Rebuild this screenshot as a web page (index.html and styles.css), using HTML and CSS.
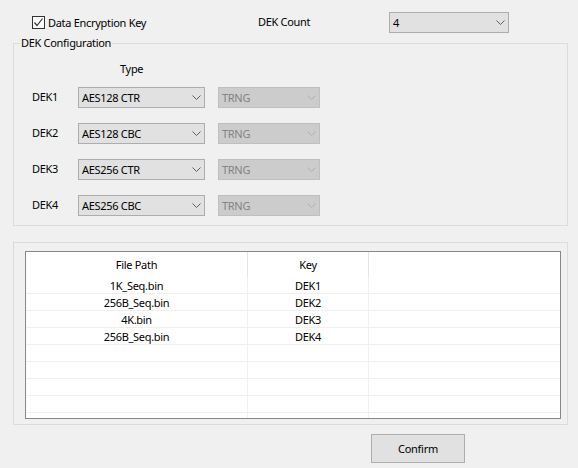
FILE: index.html
```html
<!DOCTYPE html>
<html>
<head>
<meta charset="utf-8">
<link rel="stylesheet" href="styles.css">
</head>
<body>
<div class="window">
  <div class="top-row">
    <label class="check">
      <span class="box"><svg width="11" height="11" viewBox="0 0 11 11"><polyline points="1.5,5.5 4,8.5 9.5,1.5" fill="none" stroke="#333" stroke-width="1.2"/></svg></span>
      <span class="check-text">Data Encryption Key</span>
    </label>
    <span class="count-label">DEK Count</span>
    <div class="combo combo-count"><span>4</span><svg class="chev" width="9" height="5" viewBox="0 0 9 5"><polyline points="0.5,0.5 4.5,4.5 8.5,0.5" fill="none" stroke="#606060" stroke-width="1"/></svg></div>
  </div>

  <fieldset class="group group-config">
    <legend>DEK Configuration</legend>
    <div class="type-head">Type</div>
    <div class="dek-rows">
      <div class="dek-row">
        <span class="dek-label">DEK1</span>
        <div class="combo combo-type"><span>AES128 CTR</span><svg class="chev" width="9" height="5" viewBox="0 0 9 5"><polyline points="0.5,0.5 4.5,4.5 8.5,0.5" fill="none" stroke="#606060" stroke-width="1"/></svg></div>
        <div class="combo combo-src disabled"><span>TRNG</span><svg class="chev" width="9" height="5" viewBox="0 0 9 5"><polyline points="0.5,0.5 4.5,4.5 8.5,0.5" fill="none" stroke="#b0b0b0" stroke-width="1"/></svg></div>
      </div>
      <div class="dek-row">
        <span class="dek-label">DEK2</span>
        <div class="combo combo-type"><span>AES128 CBC</span><svg class="chev" width="9" height="5" viewBox="0 0 9 5"><polyline points="0.5,0.5 4.5,4.5 8.5,0.5" fill="none" stroke="#606060" stroke-width="1"/></svg></div>
        <div class="combo combo-src disabled"><span>TRNG</span><svg class="chev" width="9" height="5" viewBox="0 0 9 5"><polyline points="0.5,0.5 4.5,4.5 8.5,0.5" fill="none" stroke="#b0b0b0" stroke-width="1"/></svg></div>
      </div>
      <div class="dek-row">
        <span class="dek-label">DEK3</span>
        <div class="combo combo-type"><span>AES256 CTR</span><svg class="chev" width="9" height="5" viewBox="0 0 9 5"><polyline points="0.5,0.5 4.5,4.5 8.5,0.5" fill="none" stroke="#606060" stroke-width="1"/></svg></div>
        <div class="combo combo-src disabled"><span>TRNG</span><svg class="chev" width="9" height="5" viewBox="0 0 9 5"><polyline points="0.5,0.5 4.5,4.5 8.5,0.5" fill="none" stroke="#b0b0b0" stroke-width="1"/></svg></div>
      </div>
      <div class="dek-row">
        <span class="dek-label">DEK4</span>
        <div class="combo combo-type"><span>AES256 CBC</span><svg class="chev" width="9" height="5" viewBox="0 0 9 5"><polyline points="0.5,0.5 4.5,4.5 8.5,0.5" fill="none" stroke="#606060" stroke-width="1"/></svg></div>
        <div class="combo combo-src disabled"><span>TRNG</span><svg class="chev" width="9" height="5" viewBox="0 0 9 5"><polyline points="0.5,0.5 4.5,4.5 8.5,0.5" fill="none" stroke="#b0b0b0" stroke-width="1"/></svg></div>
      </div>
    </div>
  </fieldset>

  <div class="group group-files">
    <div class="listview">
      <div class="lv-header">
        <div class="hcell c1">File Path</div>
        <div class="hcell c2">Key</div>
        <div class="hcell c3"></div>
      </div>
      <div class="lv-body">
        <div class="lv-row"><div class="cell c1">1K_Seq.bin</div><div class="cell c2">DEK1</div><div class="cell c3"></div></div>
        <div class="lv-row"><div class="cell c1">256B_Seq.bin</div><div class="cell c2">DEK2</div><div class="cell c3"></div></div>
        <div class="lv-row"><div class="cell c1">4K.bin</div><div class="cell c2">DEK3</div><div class="cell c3"></div></div>
        <div class="lv-row"><div class="cell c1">256B_Seq.bin</div><div class="cell c2">DEK4</div><div class="cell c3"></div></div>
        <div class="lv-row"><div class="cell c1"></div><div class="cell c2"></div><div class="cell c3"></div></div>
        <div class="lv-row"><div class="cell c1"></div><div class="cell c2"></div><div class="cell c3"></div></div>
        <div class="lv-row"><div class="cell c1"></div><div class="cell c2"></div><div class="cell c3"></div></div>
        <div class="lv-row"><div class="cell c1"></div><div class="cell c2"></div><div class="cell c3"></div></div>
        <div class="lv-row"><div class="cell c1"></div><div class="cell c2"></div><div class="cell c3"></div></div>
      </div>
    </div>
  </div>

  <div class="button-row">
    <button class="btn">Confirm</button>
  </div>
</div>
</body>
</html>
```

FILE: styles.css
```css
html, body {
  margin: 0;
  padding: 0;
  background: #f0f0f0;
}
body {
  font-family: "Noto Sans", "Open Sans", sans-serif;
  font-size: 11px;
  letter-spacing: -0.3px;
  color: #000;
  width: 578px;
  height: 468px;
  overflow: hidden;
}
.window {
  display: flex;
  flex-direction: column;
}

/* top row */
.top-row {
  display: flex;
  align-items: center;
  height: 21px;
  margin-top: 12px;
  padding-left: 32px;
}
.check {
  display: flex;
  align-items: center;
  gap: 3px;
  width: 226px;
}
.box {
  width: 11px;
  height: 11px;
  border: 1px solid #333;
  background: #fff;
  display: flex;
}
.count-label {
  width: 131px;
  margin-top: -2px;
}
.combo {
  box-sizing: border-box;
  height: 21px;
  border: 1px solid #adadad;
  background: #e1e1e1;
  display: flex;
  align-items: center;
  justify-content: space-between;
  padding: 0 2px 0 3px;
}
.combo .chev {
  flex: none;
  margin-right: 1px;
}
.combo-count {
  width: 120px;
}
.combo.disabled {
  background: #cccccc;
  border-color: #bfbfbf;
  color: #838383;
}

/* group boxes */
.group {
  border: 1px solid #dcdcdc;
  box-sizing: border-box;
  margin: 0 0 0 13px;
  width: 555px;
}
.group-config {
  margin-top: 2px;
  padding: 0;
  height: 191px;
  min-width: 0;
}
.group-config legend {
  padding: 0 1px;
  margin-left: 6px;
  line-height: 16px;
}
.type-head {
  margin: 10px 0 0 106px;
  line-height: 16px;
}
.dek-rows {
  display: flex;
  flex-direction: column;
  gap: 15px;
  margin-top: 10px;
  padding-left: 18px;
}
.dek-row {
  display: flex;
  align-items: center;
  height: 21px;
}
.dek-label {
  width: 46px;
  margin-top: -2px;
}
.combo-type {
  width: 127px;
  margin-right: 13px;
}
.combo-src {
  width: 102px;
}

.group-files {
  margin-top: 16px;
  width: 555px;
  height: 183px;
  padding: 8px 6px 5px 11px;
}
.listview {
  box-sizing: border-box;
  height: 168px;
  border: 1px solid #828790;
  background: #fff;
  overflow: hidden;
}
.lv-header {
  display: flex;
  height: 25px;
}
.hcell {
  box-sizing: border-box;
  display: flex;
  align-items: center;
  justify-content: center;
  padding-bottom: 1px;
  border-right: 1px solid #e5e5e5;
  height: 25px;
}
.c1 { width: 222px; flex: none; }
.c2 { width: 121px; flex: none; }
.c3 { flex: 1; }
.hcell.c3 { border-right: none; }
.lv-row {
  display: flex;
  height: 17px;
  border-bottom: 1px solid #f0f0f0;
  box-sizing: border-box;
}
.cell {
  box-sizing: border-box;
  border-right: 1px solid #f0f0f0;
  text-align: center;
  line-height: 16px;
  height: 16px;
  padding-top: 1px;
}
.cell.c3 { border-right: none; }

/* button */
.button-row {
  display: flex;
  padding-left: 371px;
  margin-top: 9px;
}
.btn {
  box-sizing: border-box;
  width: 94px;
  height: 29px;
  border: 1px solid #adadad;
  background: #e1e1e1;
  font-family: inherit;
  font-size: 11px;
  letter-spacing: -0.3px;
  color: #000;
  padding: 0;
}
```
